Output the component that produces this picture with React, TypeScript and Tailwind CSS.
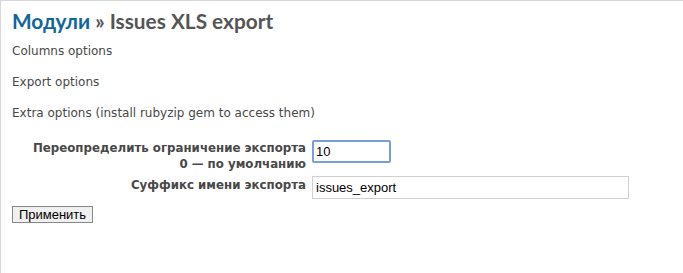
export default function App() {
  return (
    <div className="h-[273px] w-[683px] overflow-hidden bg-white">
      <div className="h-full border-l border-t border-[#d7d7d7] pl-[11px] pt-[5px] font-['DejaVu_Sans',sans-serif] text-[12px] text-[#484848]">
        <h2 className="font-['Lato',sans-serif] text-[20.8px] font-bold leading-[30px] text-[#555]">
          <span className="text-[#169]">Модули</span> » Issues XLS export
        </h2>
        <div className="mt-[6px] flex flex-col gap-[13px] leading-[18px]">
          <p>Columns options</p>
          <p>Export options</p>
          <p>Extra options (install rubyzip gem to access them)</p>
        </div>
        <div className="mt-[18px] grid grid-cols-[294px_auto] items-start gap-x-[6px] gap-y-[4px]">
          <label className="text-right text-[11.8px] font-bold leading-[16px] text-[#484848]">
            Переопределить ограничение экспорта
            <br />0 — по умолчанию
          </label>
          <input
            defaultValue="10"
            className="h-[23px] w-[79px] rounded-[2px] border-2 border-[#7a9fd6] px-[2px] font-['Liberation_Sans',sans-serif] text-[13px] text-black outline-none"
          />
          <label className="pt-[1px] text-right text-[11.8px] font-bold leading-[16px] text-[#484848]">Суффикс имени экспорта</label>
          <input
            defaultValue="issues_export"
            className="h-[23px] w-[317px] border border-[#d0d0d0] px-[3px] font-['Liberation_Sans',sans-serif] text-[13px] text-black outline-none"
          />
        </div>
        <button className="mt-[7px] h-[17px] w-[81px] border border-[#888] bg-[#f0f0f0] font-['Liberation_Sans',sans-serif] text-[13px] leading-[15px] text-black">
          Применить
        </button>
      </div>
    </div>
  );
}
